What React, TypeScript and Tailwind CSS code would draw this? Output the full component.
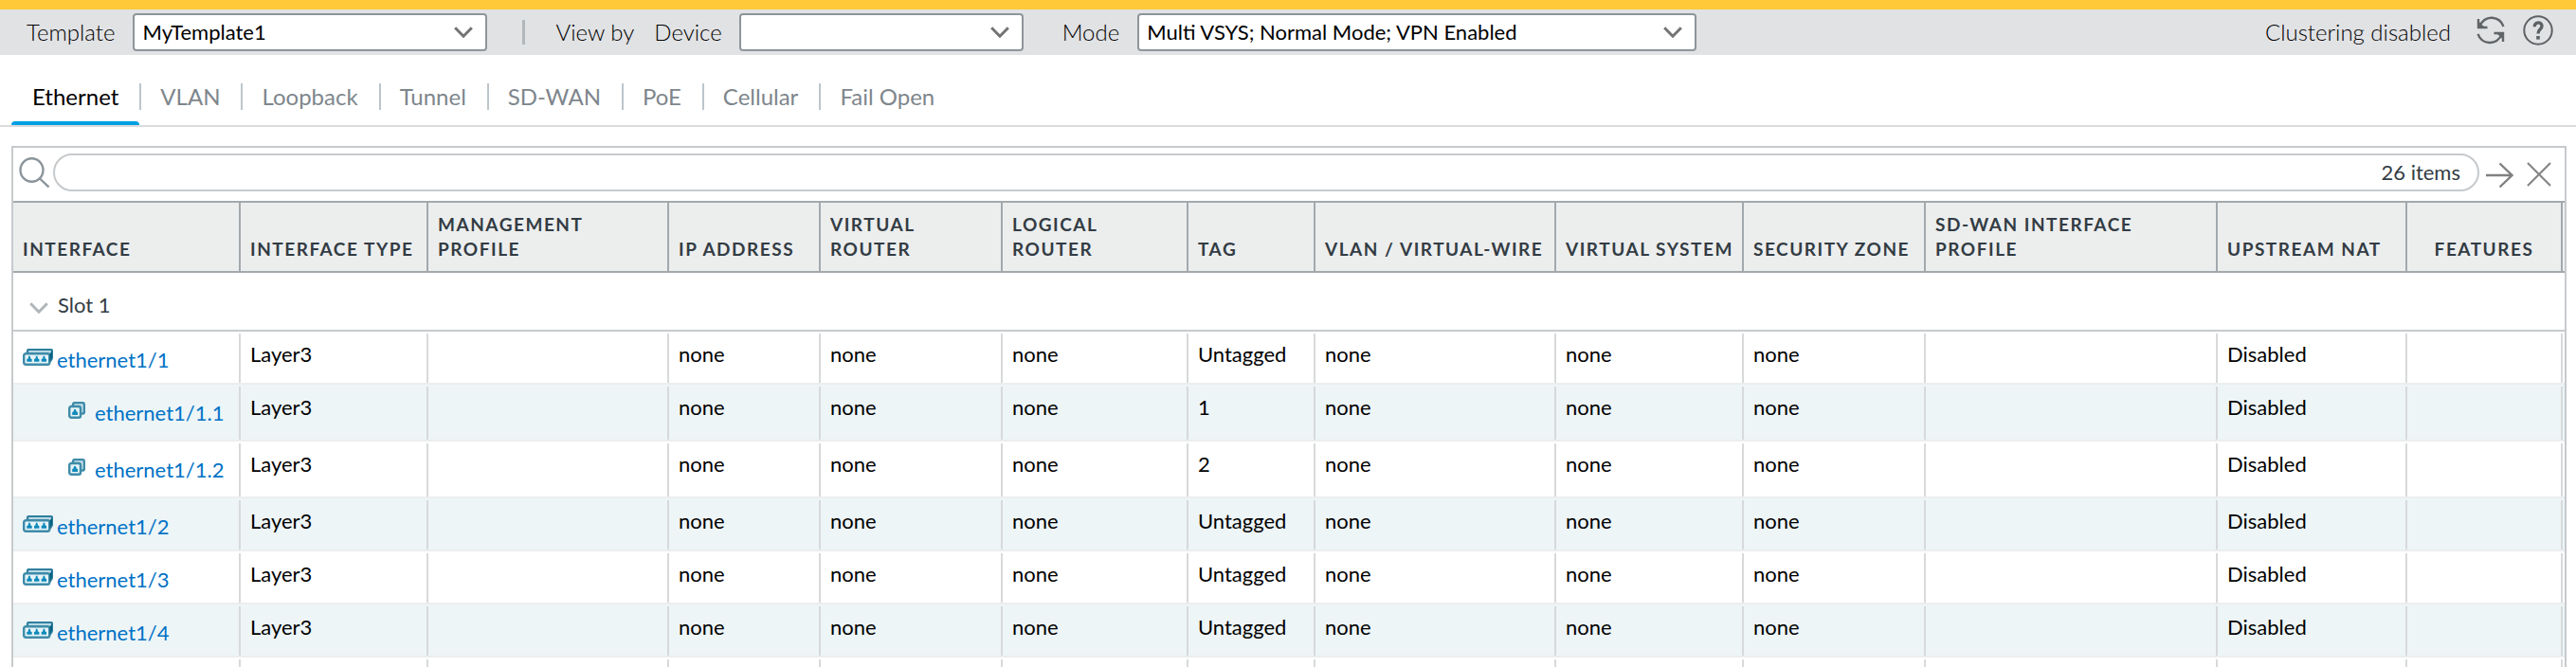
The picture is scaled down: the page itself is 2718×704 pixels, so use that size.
import React from "react";

type Column = { title: string; width: string; center?: boolean };

const columns: Column[] = [
  { title: "INTERFACE", width: "w-[240px]" },
  { title: "INTERFACE TYPE", width: "w-[198px]" },
  { title: "MANAGEMENT\nPROFILE", width: "w-[254px]" },
  { title: "IP ADDRESS", width: "w-[160px]" },
  { title: "VIRTUAL\nROUTER", width: "w-[192px]" },
  { title: "LOGICAL\nROUTER", width: "w-[196px]" },
  { title: "TAG", width: "w-[134px]" },
  { title: "VLAN / VIRTUAL-WIRE", width: "w-[254px]" },
  { title: "VIRTUAL SYSTEM", width: "w-[198px]" },
  { title: "SECURITY ZONE", width: "w-[192px]" },
  { title: "SD-WAN INTERFACE\nPROFILE", width: "w-[308px]" },
  { title: "UPSTREAM NAT", width: "w-[200px]" },
  { title: "FEATURES", width: "w-[164px]", center: true },
];

type Row = { name: string; tag: string; sub?: boolean };

const rows: Row[] = [
  { name: "ethernet1/1", tag: "Untagged" },
  { name: "ethernet1/1.1", tag: "1", sub: true },
  { name: "ethernet1/1.2", tag: "2", sub: true },
  { name: "ethernet1/2", tag: "Untagged" },
  { name: "ethernet1/3", tag: "Untagged" },
  { name: "ethernet1/4", tag: "Untagged" },
];

const tabs = ["Ethernet", "VLAN", "Loopback", "Tunnel", "SD-WAN", "PoE", "Cellular", "Fail Open"];

function Chevron({ className }: { className: string }) {
  return (
    <svg viewBox="0 0 20 12" className={className} fill="none" stroke="currentColor" strokeWidth="3" aria-hidden="true">
      <path d="M1.2 1.2 10 10.2 18.8 1.2" />
    </svg>
  );
}

function Dropdown({ id, value, width }: { id: string; value: string; width: string }) {
  return (
    <div className={`relative ${width}`}>
      <select
        id={id}
        defaultValue={value}
        className="block h-10 w-full appearance-none rounded-[4px] border-2 border-[#8e959b] bg-white pr-10 pl-2 text-[22px] leading-8 font-normal text-black"
      >
        <option value={value}>{value}</option>
      </select>
      <Chevron className="pointer-events-none absolute top-[14px] right-[15px] h-3 w-5 text-[#747474]" />
    </div>
  );
}

function Port({ x, y }: { x: number; y: number }) {
  return <path d={`M${x - 2.7} ${y + 5.2}v-2.700l1.500-.500v-1.300h2.400v1.300l1.500.500v2.700zM${x - 0.9} ${y + 1}v-1.800h1.800v1.800z`} fill="#0f8abb" />;
}

function PortsIcon() {
  return (
    <svg viewBox="0 0 32 18" className="h-[18px] w-8 shrink-0" aria-hidden="true">
      <path d="M5 4V2.500Q5 1 6.500 1H29.500Q31 1 31 2.500V9Q31 11 29.500 12.500L28 14.500" fill="#b9d9e5" stroke="#2f7f9f" strokeWidth="2.200" />
      <rect x="1.200" y="5.200" width="27" height="11.600" rx="2" fill="#e6f4f8" stroke="#3f8ba8" strokeWidth="2.400" />
      <path d="M28.500 5.500 31 2.500V9L28.500 14z" fill="#04607f" />
      <Port x={7} y={8.600} />
      <Port x={14.700} y={8.600} />
      <Port x={22.400} y={8.600} />
    </svg>
  );
}

function SubPortIcon() {
  return (
    <svg viewBox="0 0 18 18" className="h-[18px] w-[18px] shrink-0" aria-hidden="true">
      <rect x="5" y="1.100" width="11.900" height="11.500" rx="2" fill="#c5dfe9" stroke="#3f8ba8" strokeWidth="2.400" />
      <rect x="1.200" y="5" width="11.800" height="11.800" rx="2" fill="#e4f3f8" stroke="#3f8ba8" strokeWidth="2.400" />
      <path d="M4.200 14v-3l1.400-.400V9.200h.600V8h1.800v1.200h.600v1.400l1.400.400v3z" fill="#0f8abb" />
    </svg>
  );
}

function Toolbar() {
  return (
    <header className="flex h-[58px] items-center border-t-[10px] border-[#ffc939] bg-[#e1e2e4] pr-6 pl-7 text-[24px] leading-8 font-light text-black">
      <label htmlFor="template" className="mr-[19px]">Template</label>
      <Dropdown id="template" value="MyTemplate1" width="w-[374px]" />
      <span className="mr-8 ml-[37px] h-[26px] w-[3px] bg-[#b1b7bb]" />
      <span className="mr-[21px]">View by</span>
      <label htmlFor="device" className="mr-[18px]">Device</label>
      <Dropdown id="device" value="" width="w-[300px]" />
      <label htmlFor="mode" className="mr-[19px] ml-[41px]">Mode</label>
      <Dropdown id="mode" value="Multi VSYS; Normal Mode; VPN Enabled" width="w-[590px]" />
      <span className="ml-auto">Clustering disabled</span>
      <button type="button" aria-label="Refresh" className="ml-[27px] pb-1">
        <svg viewBox="0 0 30 30" className="h-[30px] w-[30px]" fill="none" stroke="#616568" strokeWidth="2.400" aria-hidden="true">
          <path d="M2 3V12H11.500" />
          <path d="M2.500 11.500C6.500 3.800 12 1.500 16.500 1.800C22 2.200 26.500 5.500 28.500 11" />
          <path d="M28 27V18H18.500" />
          <path d="M27.500 18.500C23.500 26 18 28.300 13.500 28C8 27.600 3.500 24.500 1.500 18.800" />
          <path d="M2 5.500V12H9zM28 24.500V18H21z" fill="#616568" stroke="none" />
        </svg>
      </button>
      <button type="button" aria-label="Help" className="ml-[19px] pb-1">
        <svg viewBox="0 0 32 32" className="h-8 w-8" fill="none" stroke="#5d6164" aria-hidden="true">
          <circle cx="16" cy="16" r="14.700" strokeWidth="2" />
          <path d="M12.200 12.200C12.200 6.400 20 6.600 20 11.600C20 15 16 14.800 16 19.600" strokeWidth="3.400" />
          <rect x="14.200" y="22" width="3.600" height="3.600" fill="#5d6164" stroke="none" />
        </svg>
      </button>
    </header>
  );
}

function Tabs() {
  return (
    <nav className="flex h-[76px] items-end border-b-2 border-[#dadbdc] pl-3 text-[24px] leading-7">
      {tabs.map((tab, i) => (
        <a
          key={tab}
          href="#"
          className={
            i === 0
              ? "relative flex h-11 px-[22px] text-black after:absolute after:right-0 after:bottom-0 after:left-0 after:h-1 after:rounded-t-[4px] after:bg-[#009fe3]"
              : "h-11 text-[#7e868c]"
          }
        >
          <span className={i === 0 ? "block" : "block border-l-2 border-[#bcc5ca] pr-[22px] pl-5"}>{tab}</span>
        </a>
      ))}
    </nav>
  );
}

function SearchBar() {
  return (
    <div className="flex h-14 items-center pr-[14px] pb-1 pl-1.5">
      <svg viewBox="0 0 32 32" className="h-8 w-8 shrink-0" fill="none" stroke="#8b959b" strokeWidth="2.400" aria-hidden="true">
        <ellipse cx="13.500" cy="13.500" rx="12" ry="12.300" />
        <path d="M22 22.500 31.500 31.500" />
      </svg>
      <div className="ml-1 flex h-10 grow items-center rounded-full border-2 border-[#c6cacd] bg-white px-[18px]">
        <input type="text" aria-label="Search interfaces" className="h-8 min-w-0 grow bg-transparent text-[22px] outline-none" />
        <span className="text-[22px] leading-8 text-[#333c44]">26 items</span>
      </div>
      <button type="button" aria-label="Apply filter" className="mt-1.5 ml-1.5">
        <svg viewBox="0 0 30 28" className="h-7 w-[30px]" fill="none" stroke="#808080" strokeWidth="2.400" aria-hidden="true">
          <path d="M1 14H28.500M15.500 1.500 28.500 14 15.500 26.500" />
        </svg>
      </button>
      <button type="button" aria-label="Clear filter" className="mt-1 ml-[14px]">
        <svg viewBox="0 0 26 26" className="h-[26px] w-[26px]" fill="none" stroke="#868686" strokeWidth="2.200" aria-hidden="true">
          <path d="M1 1 25 25M25 1 1 25" />
        </svg>
      </button>
    </div>
  );
}

function InterfaceTable() {
  return (
    <table className="w-full table-fixed border-separate border-spacing-0">
      <colgroup>
        {columns.map((c) => (
          <col key={c.title} className={c.width} />
        ))}
        <col className="w-[2px]" />
      </colgroup>
      <thead>
        <tr className="bg-[#eceeee]">
          {columns.map((c) => (
            <th key={c.title} scope="col" className="border-y-2 border-[#a2a9ad] p-0">
              <div
                className={`flex h-[72px] items-end border-r-2 border-[#a2a9ad] pb-2.5 text-[19px] leading-[26px] font-bold tracking-[0.080em] whitespace-pre text-[#333c44] ${c.center ? "justify-center" : "pl-2.5 text-left"}`}
              >
                {c.title}
              </div>
            </th>
          ))}
          <td className="border-y-2 border-[#a2a9ad] p-0" />
        </tr>
      </thead>
      <tbody>
        <tr>
          <td colSpan={14} className="border-b-2 border-[#c6cacd] p-0">
            <button type="button" className="flex h-[60px] w-full items-center pt-2 pl-[17px] text-[22px] leading-8 text-[#333c44]">
              <Chevron className="mt-1.5 mr-2.5 h-3 w-5 text-[#b0b6ba]" />
              Slot 1
            </button>
          </td>
        </tr>
        {rows.map((r, i) => {
          const cells = ["Layer3", "", "none", "none", "none", r.tag, "none", "none", "none", "", "Disabled", ""];
          const height = r.sub ? "h-14" : "h-[52px]";
          return (
            <tr key={r.name} className={i % 2 ? "bg-[#edf5f7]" : "bg-white"}>
              <td className="border-b-2 border-[#eceeee] p-0 pt-0.5">
                <div className={`flex items-start border-r-2 border-[#d7d9db] pt-4 ${height} ${r.sub ? "gap-2.5 pl-[58px]" : "gap-1 pl-2.5"}`}>
                  {r.sub ? <SubPortIcon /> : <PortsIcon />}
                  <a href="#" className="text-[22px] leading-6 text-[#0072c6]">{r.name}</a>
                </div>
              </td>
              {cells.map((text, n) => (
                <td key={n} className="border-b-2 border-[#eceeee] p-0 pt-0.5">
                  <div className={`border-r-2 border-[#d7d9db] pt-2 pl-2.5 text-[22px] leading-7 text-black ${height}`}>{text}</div>
                </td>
              ))}
              <td className="border-b-2 border-[#eceeee] p-0" />
            </tr>
          );
        })}
        <tr aria-hidden="true">
          {columns.map((c) => (
            <td key={c.title} className="p-0 pt-0.5">
              <div className="h-[52px] border-r-2 border-[#d7d9db]" />
            </td>
          ))}
          <td className="p-0" />
        </tr>
      </tbody>
    </table>
  );
}

export default function App() {
  return (
    <div className="h-screen overflow-hidden bg-white font-[Lato,sans-serif]">
      <Toolbar />
      <Tabs />
      <main className="mt-5 mr-2.5 ml-3 border-x-2 border-t-2 border-[#c6cacd]">
        <SearchBar />
        <InterfaceTable />
      </main>
    </div>
  );
}
